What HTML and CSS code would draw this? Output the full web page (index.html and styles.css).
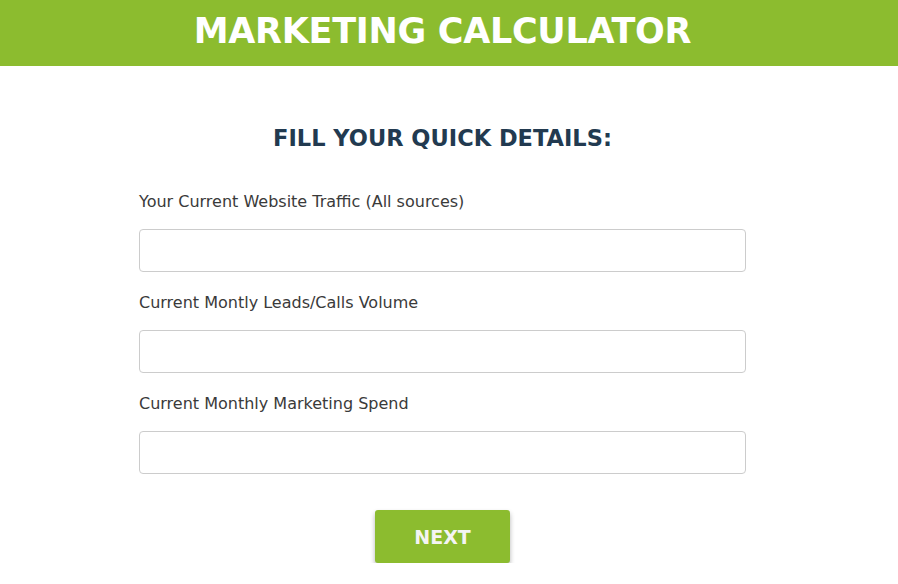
FILE: index.html
```html
<!DOCTYPE html>
<html lang="en">
  <head>
    <meta charset="UTF-8" />
    <meta name="viewport" content="width=device-width, initial-scale=1.0" />
    <title>Marketing Calculator</title>
    <link rel="stylesheet" href="styles.css">
  </head>
  <body>
    <div class="calc-header">
      <div class="inner">
        <h1>MARKETING CALCULATOR</h1>
      </div>
    </div>

    <div class="inner">
      <div class="calc-form">
        <h2>FILL YOUR QUICK DETAILS:</h2>
        <form>
          <div class="form-group">
            <label for="traffic">Your Current Website Traffic (All sources)</label>
            <input type="text" id="traffic" />
          </div>
          <div class="form-group">
            <label for="leads">Current Montly Leads/Calls Volume</label>
            <input type="text" id="leads" />
          </div>
          <div class="form-group">
            <label for="spend">Current Monthly Marketing Spend</label>
            <input type="text" id="spend" />
          </div>
          <div class="actions">
            <button type="button" class="btn">NEXT</button>
          </div>
        </form>
      </div>
    </div>
  </body>
</html>
```

FILE: styles.css
```css
body {
  font-family: "DejaVu Sans", Arial, sans-serif;
  margin: 0;
  padding: 0;
  background-color: white;
  color: #333;
}
.inner {
  width: 885px;
}
.calc-header {
  background-color: #8cbc2f;
  height: 66px;
  text-align: center;
}
.calc-header h1 {
  margin: 0;
  padding-top: 11px;
  font-size: 35px;
  line-height: 40px;
  letter-spacing: -0.3px;
  font-weight: bold;
  color: white;
}
.calc-form {
  width: 607px;
  margin: 0 auto;
  padding-top: 57px;
}
.calc-form h2 {
  margin: 0 0 39px;
  text-align: center;
  font-size: 22.5px;
  line-height: 30px;
  color: #223a50;
}
.form-group {
  margin-bottom: 21px;
}
.form-group label {
  display: block;
  margin-bottom: 17px;
  font-size: 16px;
  line-height: 20px;
  color: #3a3a3a;
}
.form-group input {
  width: 100%;
  height: 43px;
  box-sizing: border-box;
  border: 1px solid #ccc;
  border-radius: 4px;
  padding: 0 12px;
  font-size: 15px;
}
.actions {
  text-align: center;
  padding-top: 15px;
}
.btn {
  width: 135px;
  height: 53px;
  border: none;
  border-radius: 3px;
  background-color: #8cbc2f;
  color: #f4f4f4;
  font-family: "DejaVu Sans", Arial, sans-serif;
  font-size: 19px;
  font-weight: bold;
  box-shadow: 0 3px 5px rgba(0, 0, 0, 0.3);
  cursor: pointer;
}
```
